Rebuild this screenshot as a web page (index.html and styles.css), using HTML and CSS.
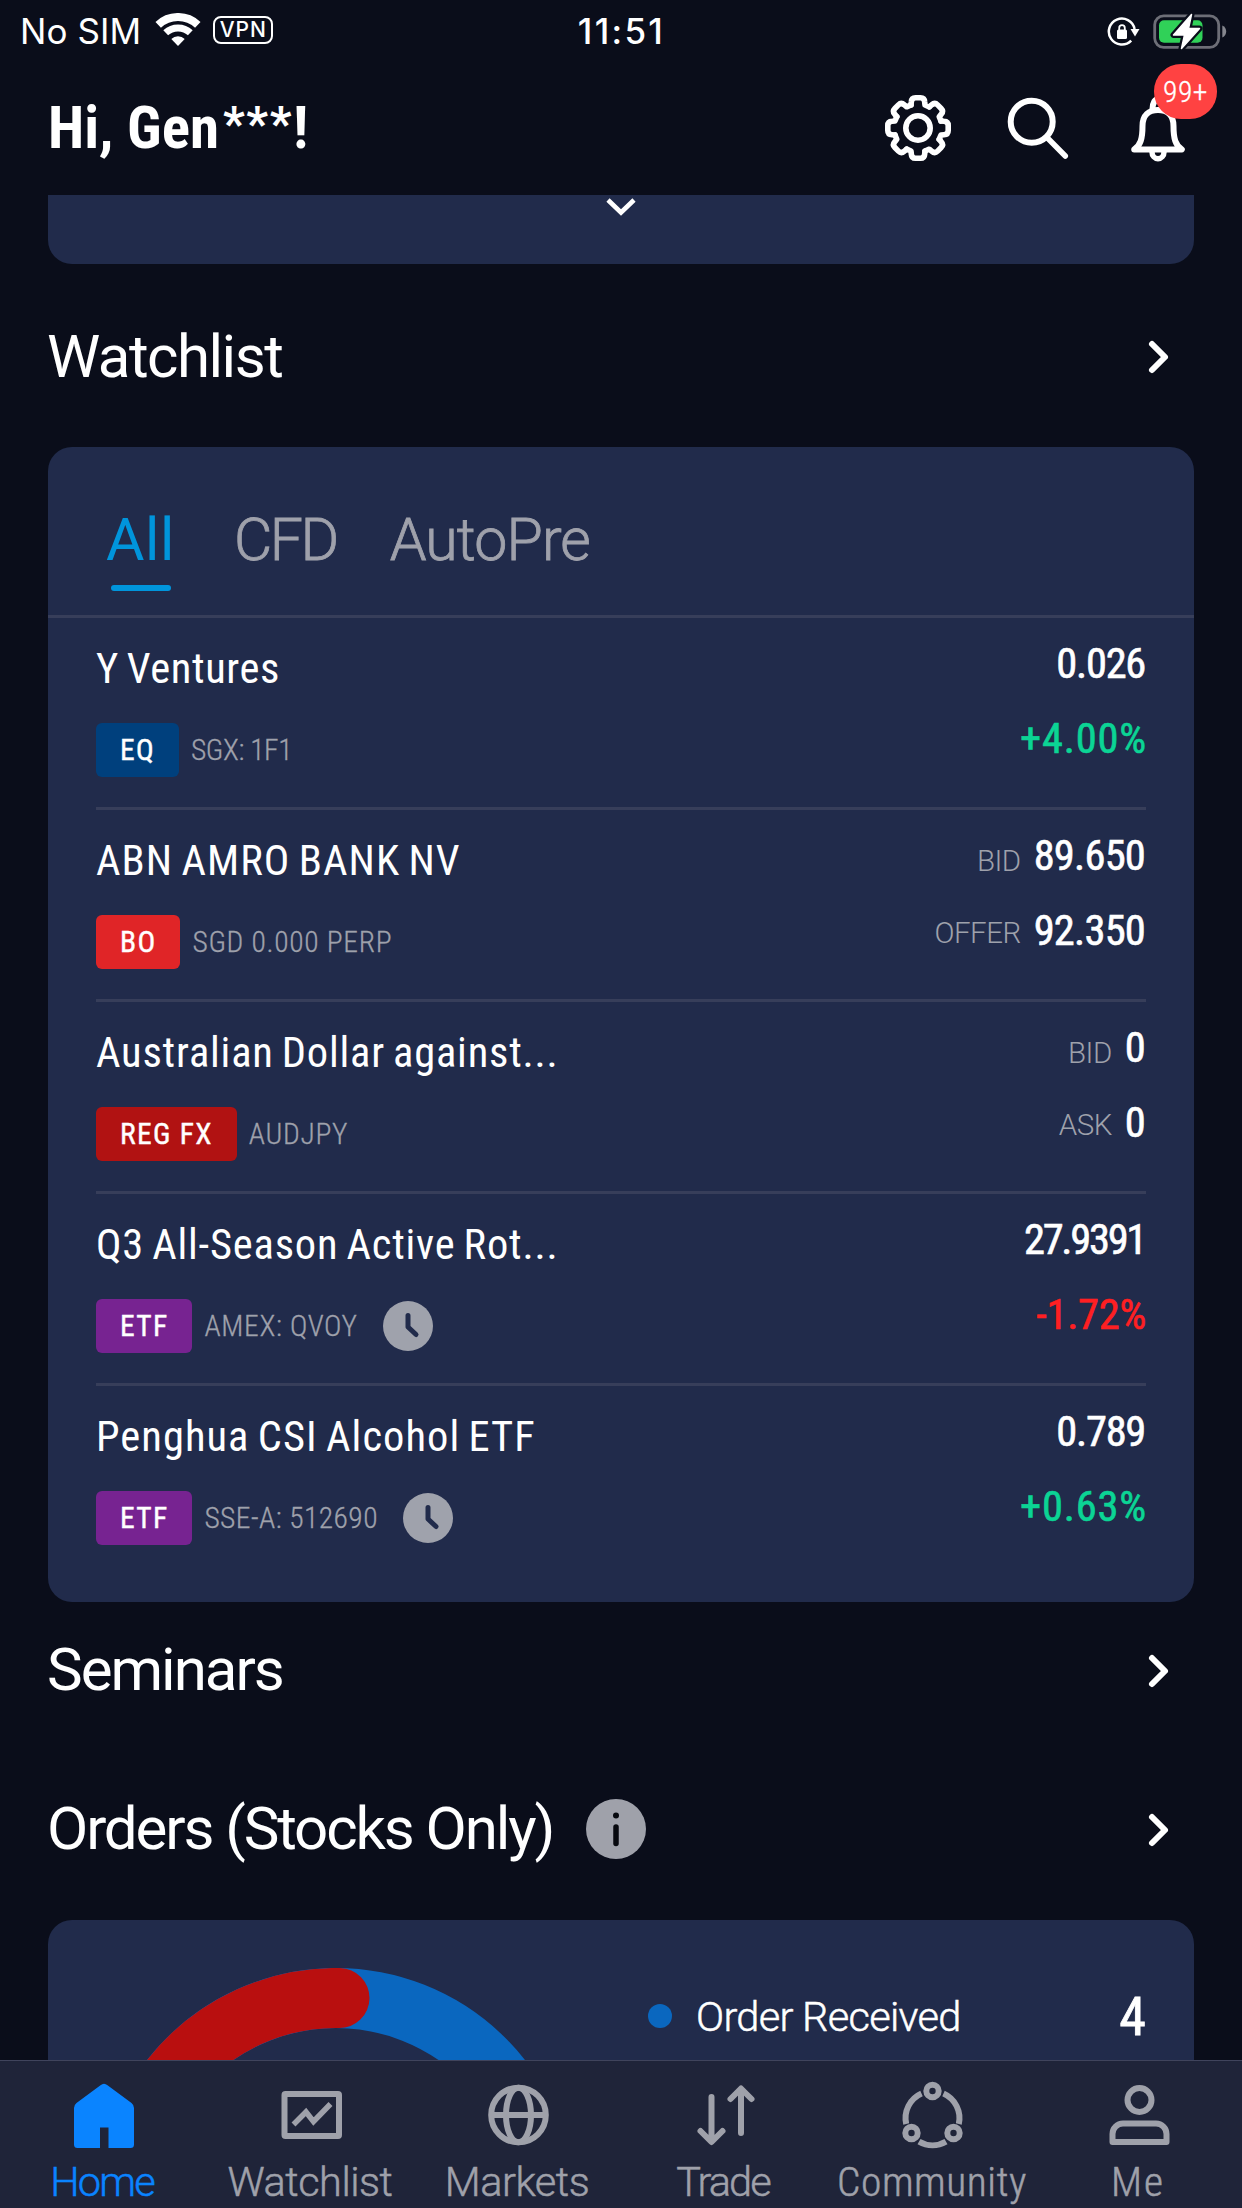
FILE: index.html
```html
<!DOCTYPE html>
<html lang="en">
<head>
<meta charset="utf-8">
<title>Home</title>
<link rel="stylesheet" href="styles.css">
</head>
<body>
<div class="app">
  <div class="status">
    <div class="status-left">
      <span class="carrier">No SIM</span>
      <svg class="wifi" width="48" height="34" viewBox="154 13 48 34" fill="none" stroke="#fff">
        <path d="M158.2 24.8A29 29 0 0 1 197.8 24.8" stroke-width="8"/>
        <path d="M165.7 32.8A18 18 0 0 1 190.3 32.8" stroke-width="7"/>
        <path d="M171.3 39A9.7 9.7 0 0 1 184.7 39L178 46Z" fill="#fff" stroke="none"/>
      </svg>
      <span class="vpn">VPN</span>
    </div>
    <span class="clock">11:51</span>
    <div class="status-right">
      <svg width="33" height="34" viewBox="1106 14 33 34" fill="none" stroke="#fff" stroke-width="2.5">
        <path d="M1130.2 40.6A13 13 0 1 1 1133.6 29"/>
        <path d="M1129.5 29H1138.5L1134 36.5Z" fill="#fff" stroke="none"/>
        <rect x="1116" y="29.5" width="10" height="9.5" rx="1.5" fill="#fff" stroke="none"/>
        <path d="M1118.2 30V28A2.8 2.8 0 0 1 1123.8 28V30" stroke-width="1.8"/>
      </svg>
      <svg width="74" height="37" viewBox="1152.5 11.5 74 37">
        <rect x="1154.2" y="14.3" width="64" height="31.5" rx="9" fill="none" stroke="#6d6e77" stroke-width="2.8"/>
        <path d="M1221.8 24C1227 26 1227 34 1221.8 36Z" fill="#85868e"/>
        <rect x="1158.5" y="18.7" width="43.5" height="22.5" rx="5" fill="#30d158"/>
        <path d="M1191 13L1173 33.5H1184L1181 47L1199 27H1188Z" fill="#fff" stroke="#0a0d1a" stroke-width="6" stroke-linejoin="round"/>
        <path d="M1191 13L1173 33.5H1184L1181 47L1199 27H1188Z" fill="#fff" stroke="#fff" stroke-width="1.5" stroke-linejoin="round"/>
      </svg>
    </div>
  </div>

  <header class="header">
    <h1>Hi, Gen<span class="masked">***</span>!</h1>
    <div class="actions">
      <svg width="72" height="72" viewBox="-36 -36 72 72" fill="none" stroke="#fff" stroke-width="5.6" stroke-linecap="round" stroke-linejoin="round">
        <path id="tooth" d="M-7 -23L-6.7 -26Q-6.5 -30.2 -2.5 -30.2H2.5Q6.5 -30.2 6.7 -26L7 -23L11.31 -21.2"/>
        <use href="#tooth" transform="rotate(45)"/>
        <use href="#tooth" transform="rotate(90)"/>
        <use href="#tooth" transform="rotate(135)"/>
        <use href="#tooth" transform="rotate(180)"/>
        <use href="#tooth" transform="rotate(225)"/>
        <use href="#tooth" transform="rotate(270)"/>
        <use href="#tooth" transform="rotate(315)"/>
        <circle r="12.2"/>
      </svg>
      <svg width="72" height="72" viewBox="0 0 72 72" fill="none" stroke="#fff" stroke-width="6" stroke-linecap="round">
        <circle cx="29.7" cy="29.7" r="21"/>
        <path d="M45 45.5L63.3 64" stroke-width="5.5"/>
      </svg>
      <div class="bell">
        <svg width="72" height="72" viewBox="0 0 72 72" fill="none" stroke="#fff" stroke-width="6" stroke-linejoin="round">
          <path d="M12.2 57.5C18.5 53 20.5 47 20.5 34C20.5 23 27 18 36 18C45 18 51.5 23 51.5 34C51.5 47 53.5 53 59.8 57.5Z"/>
          <path d="M30.5 17C31 3.5 41 3.5 41.5 17"/>
          <path d="M30 60A6 6.7 0 0 0 42 60" stroke-width="5.5"/>
        </svg>
        <span class="badge">99+</span>
      </div>
    </div>
  </header>

  <main class="content">
    <div class="card card-more">
      <svg width="32" height="20" viewBox="0 0 32 20" fill="none" stroke="#fff" stroke-width="4.6"><path d="M3 3L16 15.5L29 3"/></svg>
    </div>

    <section class="section section-watchlist">
      <h2>Watchlist</h2>
      <svg class="go" width="24" height="36" viewBox="0 0 24 36"><path d="M5 5L18 18L5 31"/></svg>
    </section>

    <div class="card">
      <div class="tabs">
        <div class="tab active">All</div>
        <div class="tab tab-cfd">CFD</div>
        <div class="tab tab-auto">AutoPre</div>
      </div>
      <div class="rows">
        <div class="row">
          <div class="info">
            <div class="name name-short">Y Ventures</div>
            <div class="meta"><span class="tag eq">EQ</span><span class="code code-tight">SGX: 1F1</span></div>
          </div>
          <div class="quotes">
            <div class="quote tight">0.026</div>
            <div class="quote up">+4.00%</div>
          </div>
        </div>
        <div class="row">
          <div class="info">
            <div class="name name-caps">ABN AMRO BANK NV</div>
            <div class="meta"><span class="tag bo">BO</span><span class="code">SGD 0.000 PERP</span></div>
          </div>
          <div class="quotes">
            <div class="quote"><span class="label">BID</span>89.650</div>
            <div class="quote"><span class="label">OFFER</span>92.350</div>
          </div>
        </div>
        <div class="row">
          <div class="info">
            <div class="name">Australian Dollar against...</div>
            <div class="meta"><span class="tag fx">REG FX</span><span class="code">AUDJPY</span></div>
          </div>
          <div class="quotes">
            <div class="quote"><span class="label">BID</span>0</div>
            <div class="quote"><span class="label">ASK</span>0</div>
          </div>
        </div>
        <div class="row">
          <div class="info">
            <div class="name">Q3 All-Season Active Rot...</div>
            <div class="meta"><span class="tag etf">ETF</span><span class="code">AMEX: QVOY</span>
              <svg class="delay" width="50" height="50" viewBox="0 0 50 50"><circle cx="25" cy="25" r="25"/><path d="M25 14.5V26L33 33.5"/></svg></div>
          </div>
          <div class="quotes">
            <div class="quote tighter">27.9391</div>
            <div class="quote down">-1.72%</div>
          </div>
        </div>
        <div class="row">
          <div class="info">
            <div class="name name-caps">Penghua CSI Alcohol ETF</div>
            <div class="meta"><span class="tag etf">ETF</span><span class="code code-number">SSE-A: 512690</span>
              <svg class="delay" width="50" height="50" viewBox="0 0 50 50"><circle cx="25" cy="25" r="25"/><path d="M25 14.5V26L33 33.5"/></svg></div>
          </div>
          <div class="quotes">
            <div class="quote tight">0.789</div>
            <div class="quote up">+0.63%</div>
          </div>
        </div>
      </div>
    </div>

    <section class="section section-seminars">
      <h2>Seminars</h2>
      <svg class="go" width="24" height="36" viewBox="0 0 24 36"><path d="M5 5L18 18L5 31"/></svg>
    </section>

    <section class="section section-orders">
      <h2>Orders (Stocks Only)</h2>
      <svg class="hint" width="60" height="60" viewBox="0 0 60 60"><circle cx="30" cy="30" r="30" fill="#9fa1aa"/><circle cx="30" cy="16.5" r="3" fill="#07090f"/><path d="M30 28V44.5" stroke="#07090f" stroke-width="5.5" stroke-linecap="round"/></svg>
      <svg class="go" width="24" height="36" viewBox="0 0 24 36"><path d="M5 5L18 18L5 31"/></svg>
    </section>

    <div class="card orders">
      <svg width="480" height="480" viewBox="0 0 480 480" fill="none" stroke-width="60">
        <circle cx="240" cy="240" r="210" stroke="#0a67bf"/>
        <path d="M40 304A210 210 0 0 1 243.5 30" stroke="#b90f0f" stroke-linecap="round"/>
      </svg>
      <div class="legend">
        <span class="dot"></span>
        <span class="legend-name">Order Received</span>
        <span class="count">4</span>
      </div>
    </div>
  </main>

  <nav class="nav">
    <a class="nav-item current">
      <svg width="72" height="72" viewBox="0 0 72 72"><path fill="#0a84ff" d="M32.5 6.3Q36 3.3 39.5 6.3L63.5 24Q66 26 66 29V65.5Q66 69 62.5 69H40.5V48.5H32V69H9.5Q6 69 6 65.5V29Q6 26 8.5 24Z"/></svg>
      <span>Home</span>
    </a>
    <a class="nav-item">
      <svg width="72" height="72" viewBox="0 0 72 72" stroke-width="6"><rect x="9.5" y="15" width="54.5" height="42" rx="1"/><path d="M18.5 45.5L31 33L38.5 42.5L55.5 25" stroke-width="5.5"/></svg>
      <span>Watchlist</span>
    </a>
    <a class="nav-item">
      <svg width="72" height="72" viewBox="0 0 72 72" stroke-width="6"><circle cx="36.5" cy="36" r="27.3"/><ellipse cx="36.5" cy="36" rx="12.5" ry="27.3"/><path d="M9 36H64"/></svg>
      <span>Markets</span>
    </a>
    <a class="nav-item trade">
      <svg width="72" height="72" viewBox="0 0 72 72" stroke-width="6" stroke-linecap="round" stroke-linejoin="round"><path d="M22.5 18V62M11.5 52L22.5 63L33.5 52M52 54V10M41.5 20L52 9.5L62.5 20"/></svg>
      <span>Trade</span>
    </a>
    <a class="nav-item community">
      <svg width="72" height="72" viewBox="0 0 72 72" stroke-width="6"><circle cx="36.5" cy="12" r="6.2"/><circle cx="15.5" cy="54" r="6.2"/><circle cx="57.5" cy="54" r="6.2"/><path d="M10.2 45A27 27 0 0 1 25.5 14.5M62.8 45A27 27 0 0 0 47.5 14.5M23 62.7A27 27 0 0 0 50 62.7"/></svg>
      <span>Community</span>
    </a>
    <a class="nav-item me">
      <svg width="72" height="72" viewBox="0 0 72 72" stroke-width="6" stroke-linejoin="round"><circle cx="36.5" cy="21" r="12"/><path d="M9.5 63V55A10.5 10.5 0 0 1 20 44.5H53A10.5 10.5 0 0 1 63.5 55V63Z"/></svg>
      <span>Me</span>
    </a>
  </nav>
</div>
</body>
</html>
```
FILE: styles.css
```css
* { box-sizing: border-box; margin: 0; padding: 0; }
body {
  background: #0a0d1a;
  color: #fff;
  font-family: "Roboto Condensed", Roboto, sans-serif;
}
svg { display: block; flex: none; }
.app { width: 1242px; height: 2208px; display: flex; flex-direction: column; overflow: hidden; }

/* status bar */
.status {
  height: 62px;
  flex: none;
  display: grid;
  grid-template-columns: 1fr auto 1fr;
  padding: 0 15px 0 20px;
  font-family: Inter, sans-serif;
  font-size: 35px;
  line-height: 62px;
}
.status-left, .status-right { display: flex; align-items: center; }
.status-right { justify-content: flex-end; gap: 13px; }
.carrier { letter-spacing: .1px; }
.wifi { margin: 0 11px 3px 13px; }
.vpn {
  height: 28px;
  width: 60px;
  border: 2.5px solid #fff;
  border-radius: 8px;
  font-size: 21px;
  line-height: 23px;
  letter-spacing: 1px;
  text-align: center;
  font-weight: 500;
  margin-bottom: 2px;
}
.clock { font-weight: 500; letter-spacing: 2.3px; margin-right: 4px; }

/* header */
.header {
  height: 133px;
  flex: none;
  display: flex;
  justify-content: space-between;
  align-items: center;
  padding: 0 48px 1px;
}
h1 { font-size: 59px; font-weight: 700; letter-spacing: 0; line-height: 132px; }
.masked { font-size: 48px; letter-spacing: 1.6px; line-height: 1; vertical-align: 8px; margin-left: 4px; }
.actions { display: flex; gap: 48px; }
.bell { position: relative; }
.badge {
  position: absolute;
  left: 32px;
  top: -28px;
  width: 63px;
  height: 55px;
  border-radius: 27px;
  background: #ff4242;
  font-size: 29.5px;
  font-weight: 300;
  line-height: 56px;
  letter-spacing: .5px;
  text-align: center;
  -webkit-text-stroke: .3px;
}

/* content */
.content { flex: 1; min-height: 0; overflow: hidden; padding: 0 48px; display: flex; flex-direction: column; }
.card { background: #212b4b; border-radius: 24px; flex: none; }
.card-more { height: 69px; border-radius: 0 0 24px 24px; display: flex; justify-content: center; padding-top: 2px; }
.section { flex: none; display: flex; align-items: center; padding-right: 23px; }
.section-watchlist { height: 183px; padding-top: 3px; }
.section-seminars { height: 136px; }
.section-orders { height: 182px; }
h2 { font-family: Roboto, sans-serif; font-size: 60px; font-weight: 400; line-height: 80px; letter-spacing: -1.5px; margin-left: -1px; }
.section-seminars h2 { letter-spacing: -2px; }
.section-orders h2 { letter-spacing: -2.1px; }
.go { margin-left: auto; fill: none; stroke: #fff; stroke-width: 6px; stroke-linecap: round; stroke-linejoin: round; }
.section-seminars .go, .section-orders .go { margin-top: 2px; }
.hint { margin-left: 33px; }

.tabs { display: flex; height: 171px; border-bottom: 3px solid #373e5a; padding: 48px 0 0 58px; }
.tab { font-family: Roboto, sans-serif; font-size: 59px; font-weight: 300; line-height: 90px; letter-spacing: -.9px; color: #9fa1ab; -webkit-text-stroke: .8px; }
.tab.active { color: #0095dc; font-weight: 400; letter-spacing: .6px; -webkit-text-stroke: 0; }
.tab.active::after { content: ""; display: block; width: 60px; height: 6px; border-radius: 3px; background: #0095dc; margin-left: 5px; }
.tab-cfd { margin-left: 59px; letter-spacing: -2.5px; }
.tab-auto { margin-left: 53px; }

.rows { padding: 0 48px 27px; }
.row { display: flex; justify-content: space-between; height: 192px; border-bottom: 3px solid #373e5a; }
.row:last-child { height: 189px; border-bottom: 0; }
.info { padding-top: 23px; }
.name { font-size: 42.5px; line-height: 56px; letter-spacing: .8px; word-spacing: -2.5px; white-space: nowrap; }
.name-short { letter-spacing: .6px; }
.name-caps { letter-spacing: 1.05px; }
.meta { display: flex; align-items: center; margin-top: 26px; height: 54px; font-size: 29.5px; line-height: 54px; }
.tag { padding: 0 24px; border-radius: 6px; letter-spacing: 1.3px; margin-right: 12px; -webkit-text-stroke: .4px; }
.eq { background: #00407d; }
.bo { background: #e02527; }
.fx { background: #b11212; }
.etf { background: #772391; }
.code { font-weight: 300; letter-spacing: .7px; color: #9fa1ab; -webkit-text-stroke: .3px; }
.code-tight { letter-spacing: -.4px; }
.code-number { letter-spacing: .45px; }
.delay { margin-left: 25px; }
.delay circle { fill: #9fa2ac; }
.delay path { fill: none; stroke: #212b4b; stroke-width: 5px; stroke-linecap: round; stroke-linejoin: round; }

.quotes { padding: 17.5px 1px 0 0; display: flex; flex-direction: column; gap: 19px; }
.quote { height: 56px; display: flex; justify-content: flex-end; font-size: 42.5px; line-height: 56px; letter-spacing: -.8px; -webkit-text-stroke: .6px; }
.quote.tight { letter-spacing: -1.3px; }
.quote.tighter { letter-spacing: -2.3px; }
.quote.up { color: #0bd495; letter-spacing: .8px; margin-right: -2px; }
.quote.down { color: #ff1f22; letter-spacing: -.3px; margin-right: -1px; }
.label { font-family: Roboto, sans-serif; font-size: 29.5px; font-weight: 300; letter-spacing: -.5px; color: #9fa1ab; line-height: 67px; margin-right: 13px; -webkit-text-stroke: 0; }
.quote + .quote .label { line-height: 61px; }

/* orders summary */
.orders { display: flex; gap: 72px; padding: 48px 48px 0; height: 576px; }
.legend { flex: 1; display: flex; align-items: center; height: 96px; }
.dot { width: 24px; height: 24px; border-radius: 50%; background: #0a67bf; margin-right: 24px; }
.legend-name { font-family: Roboto, sans-serif; font-size: 41.5px; font-weight: 300; letter-spacing: -.7px; -webkit-text-stroke: .5px; }
.count { margin-left: auto; font-size: 54px; -webkit-text-stroke: .8px; }

/* bottom navigation */
.nav {
  flex: none;
  height: 148px;
  display: grid;
  grid-template-columns: repeat(6, 1fr);
  background: #1f2439;
  border-top: 1px solid #40445c;
  padding-top: 18px;
}
.nav-item {
  display: flex;
  flex-direction: column;
  align-items: center;
  gap: 7px;
  color: #9fa1aa;
  font-family: Roboto, sans-serif;
  font-size: 41.5px;
  font-weight: 300;
  line-height: 48px;
  letter-spacing: -.5px;
  -webkit-text-stroke: .5px;
}
.nav-item svg { fill: none; stroke: #9fa1aa; }
.nav-item span { margin-right: 1px; }
.nav-item.current { color: #0a84ff; letter-spacing: -1.8px; }
.nav-item.current svg { stroke: none; }
.nav-item.trade { letter-spacing: -1.9px; }
.nav-item.current span, .nav-item.trade span { margin-right: 3px; }
.nav-item.community, .nav-item.me { font-family: "Roboto Condensed", Roboto, sans-serif; letter-spacing: .5px; }
.nav-item.community span { margin-right: -1px; }
.nav-item.me { letter-spacing: 2px; }
```
